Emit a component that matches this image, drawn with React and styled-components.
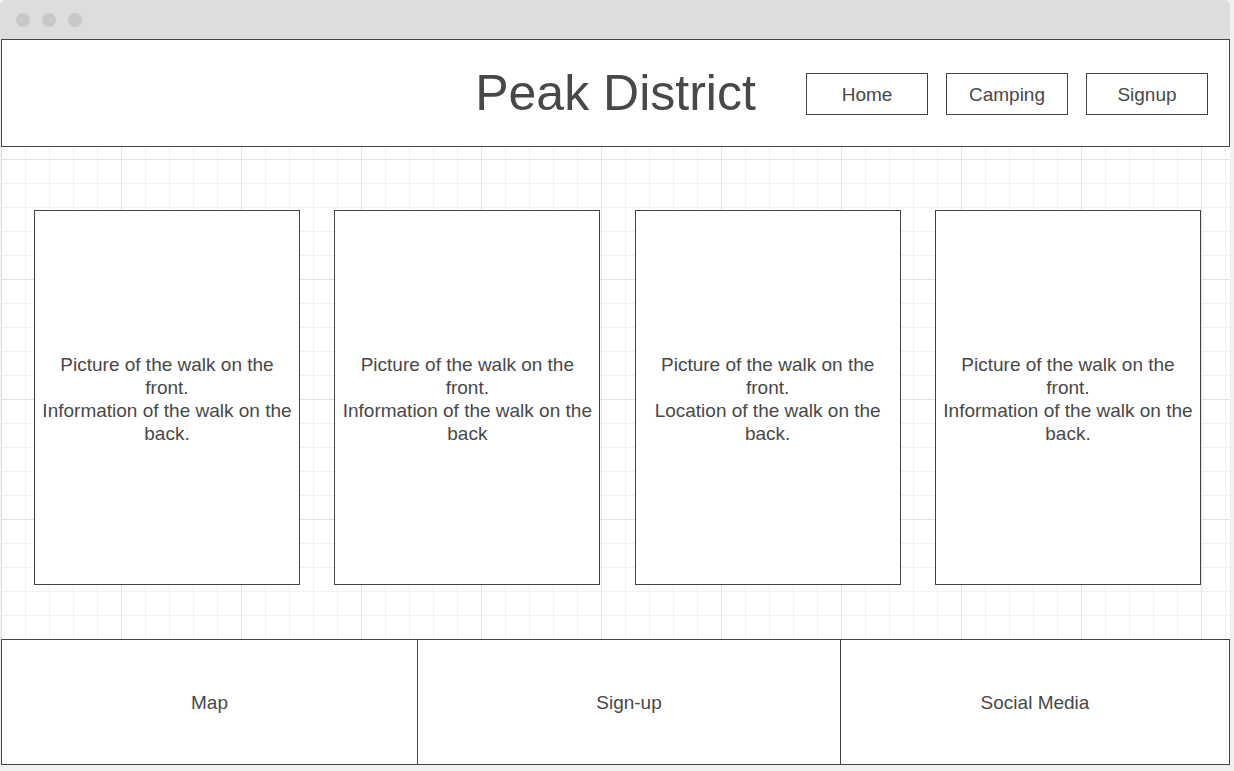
import React from 'react';
import styled, { createGlobalStyle } from 'styled-components';

const GlobalStyle = createGlobalStyle`
  html, body {
    margin: 0;
    padding: 0;
    background: #f1f1f1;
  }
  body {
    font-family: "Liberation Sans", Arial, sans-serif;
    color: #484848;
  }
`;

const Window = styled.div`
  width: 1230px;
  height: 771px;
  display: flex;
  flex-direction: column;
`;

const Chrome = styled.div`
  height: 39px;
  background: #dddddd;
  border-radius: 6px 6px 0 0;
  display: flex;
  align-items: center;
  gap: 12px;
  padding-left: 16px;
`;

const Dot = styled.span`
  width: 14px;
  height: 14px;
  border-radius: 50%;
  background: #c8c8c8;
`;

const Section = styled.div`
  margin-left: 1px;
  width: 1229px;
  box-sizing: border-box;
`;

const Header = styled(Section)`
  height: 108px;
  border: 1px solid #444;
  background: #fff;
  display: grid;
  grid-template-columns: 1fr auto 1fr;
  align-items: center;
`;

const Title = styled.h1`
  grid-column: 2;
  margin: 0;
  font-weight: normal;
  font-size: 50px;
  color: #484848;
  line-height: 1;
`;

const Nav = styled.nav`
  grid-column: 3;
  justify-self: end;
  display: flex;
  gap: 18px;
  padding-right: 21px;
  padding-top: 1px;
`;

const NavButton = styled.div`
  width: 122px;
  height: 42px;
  box-sizing: border-box;
  border: 1px solid #444;
  display: flex;
  align-items: center;
  justify-content: center;
  font-size: 19px;
  color: #484848;
  padding-top: 2px;
`;

const Board = styled(Section)`
  height: 492px;
  background-color: #fff;
  background-image:
    linear-gradient(to right, #e2e2e2 1px, transparent 1px),
    linear-gradient(to bottom, #e2e2e2 1px, transparent 1px),
    linear-gradient(to right, #f1f1f1 1px, transparent 1px),
    linear-gradient(to bottom, #f1f1f1 1px, transparent 1px);
  background-size: 120px 120px, 120px 120px, 24px 24px, 24px 24px;
  background-position: 0 12px, 0 12px, 0 12px, 0 12px;
  display: flex;
  justify-content: space-between;
  align-items: flex-start;
  padding: 63px 29px 0 33px;
`;

const Card = styled.div`
  width: 266px;
  height: 375px;
  box-sizing: border-box;
  border: 1px solid #444;
  background: #fff;
  display: flex;
  align-items: center;
  justify-content: center;
  text-align: center;
  font-size: 19px;
  line-height: 23px;
  color: #484848;
  padding: 2px 5px 0;
`;

const Footer = styled(Section)`
  height: 126px;
  border: 1px solid #444;
  background: #fff;
  display: grid;
  grid-template-columns: 415px 423px 1fr;
`;

const FooterCell = styled.div`
  display: flex;
  align-items: center;
  justify-content: center;
  font-size: 19px;
  color: #484848;
  border-left: ${p => (p.$first ? 'none' : '1px solid #444')};
  padding-top: 2px;
`;

const cards = [
  ['Picture of the walk on the front.', 'Information of the walk on the back.'],
  ['Picture of the walk on the front.', 'Information of the walk on the back'],
  ['Picture of the walk on the front.', 'Location of the walk on the back.'],
  ['Picture of the walk on the front.', 'Information of the walk on the back.'],
];

export default function App() {
  return (
    <>
      <GlobalStyle />
      <Window>
        <Chrome>
          <Dot />
          <Dot />
          <Dot />
        </Chrome>
        <Header>
          <Title>Peak District</Title>
          <Nav>
            <NavButton>Home</NavButton>
            <NavButton>Camping</NavButton>
            <NavButton>Signup</NavButton>
          </Nav>
        </Header>
        <Board>
          {cards.map((c, i) => (
            <Card key={i}>
              <div>
                {c[0]}
                <br />
                {c[1]}
              </div>
            </Card>
          ))}
        </Board>
        <Footer>
          <FooterCell $first>Map</FooterCell>
          <FooterCell>Sign-up</FooterCell>
          <FooterCell>Social Media</FooterCell>
        </Footer>
      </Window>
    </>
  );
}
